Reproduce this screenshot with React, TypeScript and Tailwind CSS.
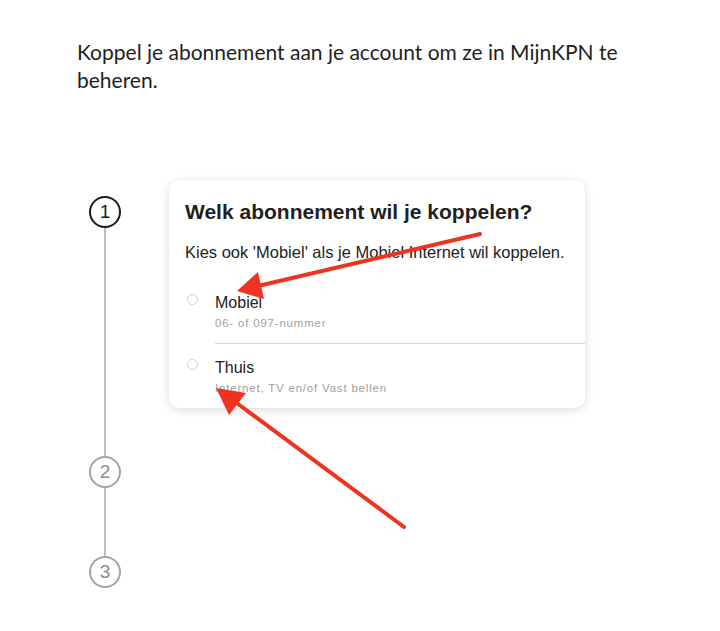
import React from "react";

const sans = { fontFamily: '"Liberation Sans", Arial, sans-serif' };

function Step({ n, active }: { n: number; active?: boolean }) {
  return (
    <div
      className={`flex h-8 w-8 items-center justify-center rounded-full border-2 text-[19px] ${
        active ? "border-[#1a1a1a] text-[#1a1a1a]" : "border-[#a3a3a3] text-[#8a8a8a]"
      }`}
      style={sans}
    >
      {n}
    </div>
  );
}

function Option({ title, sub, divider }: { title: string; sub: string; divider?: boolean }) {
  return (
    <div className="flex">
      <div className="w-[46px] pl-[18px] pt-[4px]">
        <div className="h-[11px] w-[11px] rounded-full border border-[#cfcfcf]" />
      </div>
      <div className={`flex-1 pt-[2px] pb-[12px] ${divider ? "border-b border-[#d4d4d4]" : ""}`}>
        <div className="text-[16px] leading-[22px] text-[#222]">{title}</div>
        <div className="mt-[1px] text-[11.5px] leading-[16px] tracking-[0.8px] text-[#a0a0a0]">{sub}</div>
      </div>
    </div>
  );
}

export default function App() {
  return (
    <div className="relative min-h-[631px] w-[720px] bg-white text-[#1f1f1f]">
      <p className="pl-[77px] pr-[80px] pt-[38px] text-[21px] leading-[28px]" style={{ fontFamily: "Lato, sans-serif" }}>
        Koppel je abonnement aan je account om ze in MijnKPN te beheren.
      </p>

      <div className="mt-[86px] flex pl-[89px]" style={sans}>
        <div className="flex w-8 flex-col items-center pt-[16px]">
          <Step n={1} active />
          <div className="h-[228px] w-[2px] bg-[#bdbdbd]" />
          <Step n={2} />
          <div className="h-[68px] w-[2px] bg-[#bdbdbd]" />
          <Step n={3} />
        </div>

        <div className="ml-[48px] self-start w-[416px] rounded-[10px] bg-white shadow-[0_2px_10px_rgba(0,0,0,0.14)]">
          <h2 className="px-4 pt-[18px] text-[21px] font-bold leading-[28px] text-[#1f1f1f]">
            Welk abonnement wil je koppelen?
          </h2>
          <p className="mt-[15px] px-4 text-[16.5px] leading-[22px] text-[#222]">
            Kies ook 'Mobiel' als je Mobiel Internet wil koppelen.
          </p>
          <div className="mt-[27px]">
            <Option title="Mobiel" sub="06- of 097-nummer" divider />
            <div className="h-[11px]" />
            <Option title="Thuis" sub="Internet, TV en/of Vast bellen" />
          </div>
        </div>
      </div>

      {/* annotation arrows */}
      <svg className="pointer-events-none absolute inset-0" width="720" height="631">
        <line x1="480" y1="234" x2="258" y2="286" stroke="#ee3420" strokeWidth="4" strokeLinecap="round" />
        <polygon points="237,291 258,272 264,299" fill="#ee3420" />
        <line x1="404" y1="527" x2="234" y2="401" stroke="#ee3420" strokeWidth="4" strokeLinecap="round" />
        <polygon points="216,388 246,393 229,415" fill="#ee3420" />
      </svg>
    </div>
  );
}
